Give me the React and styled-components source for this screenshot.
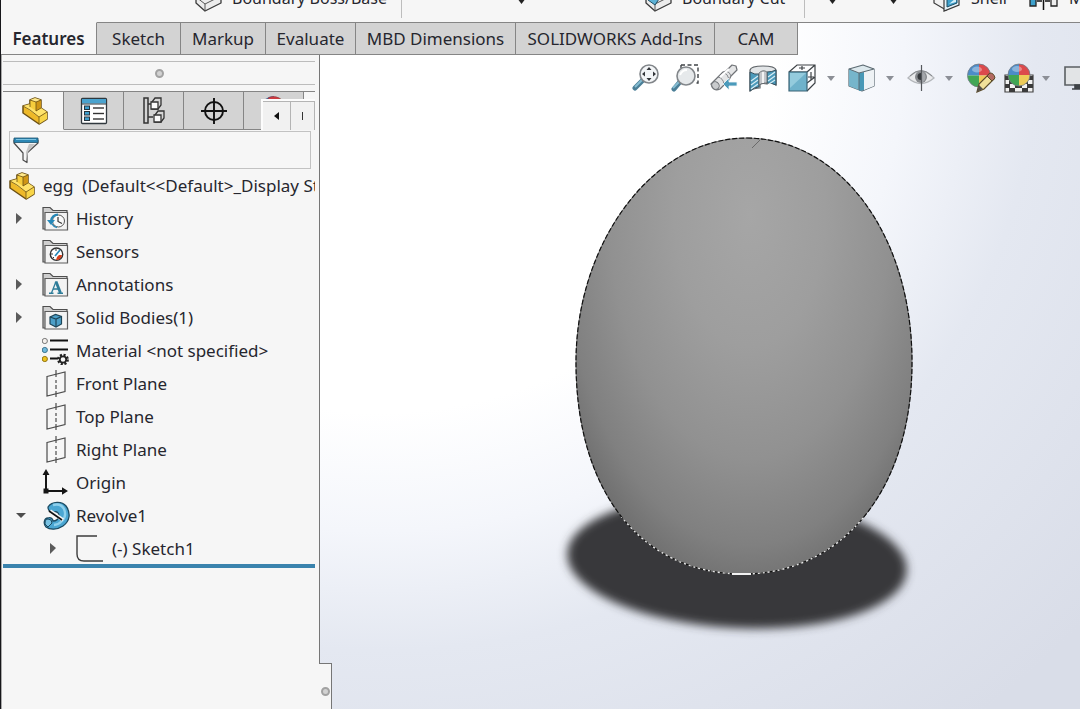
import React from "react";
import styled, { createGlobalStyle, css } from "styled-components";

const GlobalStyle = createGlobalStyle`
  *, *::before, *::after { box-sizing: border-box; }
  body {
    margin: 0;
    font-family: "Noto Sans", "Open Sans", sans-serif;
    font-size: 17px;
    line-height: 24px;
    color: #26262e;
    background: #f6f6f6;
  }
  button, input { font: inherit; color: inherit; margin: 0; padding: 0; border: 0; background: none; }
  ul { list-style: none; margin: 0; padding: 0; }
  svg { display: block; flex: none; }
`;

const Window = styled.div`
  min-height: 100vh;
  display: flex;
  flex-direction: column;
  overflow: hidden;
  border-left: 1px solid #16161a;
`;

/* ---------- ribbon ---------- */
const Ribbon = styled.header`
  height: 22px;
  display: flex;
  align-items: flex-end;
  padding: 0 0 10px 194px;
  overflow: hidden;
  background: #f6f6f6;
`;
const RibbonGroup = styled.div`
  display: flex;
  align-items: flex-end;
  flex: none;
  width: ${(p) => p.$width}px;
`;
const RibbonButton = styled.button`
  display: flex;
  align-items: flex-end;
  gap: 10px;
  flex: none;
  white-space: nowrap;
  font-size: 16px;
  line-height: 28px;
`;
const RibbonDrop = styled.button`
  flex: none;
  margin-left: auto;
  padding-bottom: 8px;
`;
const RibbonRule = styled.span`
  flex: none;
  width: 1px;
  height: 40px;
  margin-bottom: -6px;
  background: #bdbdbd;
`;

/* ---------- command tabs ---------- */
const Stage = styled.main`
  flex: 1;
  display: flex;
  flex-direction: column;
  background: radial-gradient(ellipse 76% 108% at 35% 5%, #ffffff 0 48%, #f4f6fb 64%, #e4e8f1 80%, #d9dde8 115%);
`;
const CommandTabs = styled.nav`
  display: flex;
  height: 33px;
`;
const CommandTab = styled.button`
  flex: none;
  width: ${(p) => p.$width}px;
  height: 33px;
  border-right: 1px solid #858585;
  border-bottom: 1px solid #858585;
  border-top: 1px solid #858585;
  background: #d3d3d3;
  font-size: 17px;
  white-space: nowrap;
  ${(p) =>
    p.$active &&
    css`
      border-top-color: #f6f6f6;
      background: #f6f6f6;
      font-weight: 600;
    `}
`;
const TabsRest = styled.div`
  flex: 1;
  border-top: 1px solid #858585;
`;

/* ---------- side panel ---------- */
const Body = styled.div`
  flex: 1;
  display: flex;
`;
const Side = styled.aside`
  flex: none;
  width: 331px;
  display: flex;
  flex-direction: column;
`;
const Panel = styled.section`
  flex: 1;
  width: 319px;
  padding: 0 4px 0 1px;
  border-left: 1px solid #a9a9a9;
  border-right: 1px solid #767676;
  background: #f6f6f6;
`;
const Grip = styled.div`
  height: 24px;
  margin-top: 6px;
  display: flex;
  align-items: center;
  justify-content: center;
  border-top: 1px solid #bcbcbc;
  border-bottom: 1px solid #bcbcbc;
`;
const Dot = styled.span`
  width: 9px;
  height: 9px;
  border: 2px solid #a2a2a2;
  border-radius: 50%;
  background: #d2d2d2;
`;
const ManagerTabs = styled.div`
  position: relative;
  display: flex;
  height: 39px;
  margin-top: 6px;
  overflow: hidden;
  border-top: 1px solid #858585;
`;
const ManagerTab = styled.button`
  flex: none;
  width: ${(p) => (p.$active ? 61 : 60)}px;
  display: flex;
  align-items: center;
  justify-content: center;
  border-right: 1px solid #858585;
  border-bottom: 1px solid ${(p) => (p.$active ? "#f6f6f6" : "#858585")};
  background: ${(p) => (p.$active ? "#f6f6f6" : "#d3d3d3")};
  ${(p) => p.$active && "padding-left: 4px;"}
`;
const TabScroller = styled.div`
  position: absolute;
  right: 0;
  bottom: 0;
  display: flex;
  width: 54px;
  height: 31px;
  border-top: 2px solid #fcfcfc;
  border-left: 2px solid #fcfcfc;
`;
const ScrollButton = styled.button`
  flex: none;
  width: ${(p) => p.$width}px;
  display: flex;
  align-items: center;
  justify-content: center;
  border: 1px solid #b4b4b4;
  border-width: 1px 1px 0 0;
  background: #f1f1f1;
`;
const FilterBox = styled.label`
  display: flex;
  align-items: center;
  gap: 8px;
  height: 38px;
  margin: 1px 4px 0 6px;
  padding-left: 3px;
  border: 1px solid #c2c2c2;
`;
const FilterInput = styled.input`
  flex: 1;
  min-width: 0;
  height: 32px;
  outline: none;
`;
const TreeRow = styled.li`
  display: flex;
  align-items: center;
  height: 33px;
  padding-left: ${(p) => p.$indent}px;
  overflow: hidden;
  white-space: pre;
`;
const Expander = styled.button`
  flex: none;
  width: 26px;
  height: 20px;
  display: flex;
  align-items: center;
`;
const TreeLabel = styled.button`
  display: flex;
  align-items: center;
  gap: ${(p) => (p.$nested ? 10 : 8)}px;
  white-space: pre;
`;
const IconSlot = styled.span`
  flex: none;
  width: 26px;
`;
const RollbackBar = styled.div`
  height: 4px;
  margin-top: -1px;
  background: #3a83ad;
`;
const SideFoot = styled.div`
  height: 46px;
  display: flex;
`;
const FootFill = styled.div`
  flex: 1;
  border-left: 1px solid #a9a9a9;
  background: #f6f6f6;
`;
const FootGrip = styled.div`
  width: 13px;
  display: flex;
  align-items: center;
  justify-content: center;
  padding-top: 9px;
  border-top: 1px solid #767676;
  border-right: 1px solid #767676;
  background: #f6f6f6;
`;

/* ---------- graphics area ---------- */
const Canvas = styled.section`
  flex: 1;
  min-width: 0;
  display: flex;
  flex-direction: column;
  overflow: hidden;
`;
const ViewTools = styled.div`
  display: flex;
  align-items: center;
  height: 46px;
  padding-left: 300px;
`;
const ToolGroup = styled.div`
  flex: none;
  display: flex;
`;
const ViewTool = styled.button`
  flex: none;
  width: ${(p) => (p.$wide ? 39 : 38)}px;
  height: 36px;
  display: flex;
  align-items: center;
`;
const ViewDrop = styled.button`
  flex: none;
  width: 21px;
  height: 36px;
  display: flex;
  align-items: center;
`;
const Scene = styled.div`
  display: flex;
  justify-content: center;
  padding: 19px 0 0 76px;
`;

/* ---------- icons ---------- */
const Svg = ({ w = 28, h = 28, children }) => (
  <svg width={w} height={h} viewBox={`0 0 ${w} ${h}`} fill="none" aria-hidden="true">
    {children}
  </svg>
);

const PartIcon = () => (
  <Svg w={26} h={28}>
    <path d="M1 9l7-2V3l5-2 6 2v8l6 4v7l-8 5L1 16z" fill="#eeb929" stroke="#6b5015" strokeWidth="1.500" strokeLinejoin="round" />
    <path d="M1 9l7-2 4 3 7 1 6 4-8 5z" fill="#ffe36b" />
    <path d="M8 3l5-2 6 2-5 2z" fill="#ffe88a" />
    <path d="M8 3l6 2v9l-6-4z" fill="#f6cd3c" />
    <path d="M14 5l5-2v8l-5 3z" fill="#cf9616" />
    <path d="M17 20l8-5v7l-8 5z" fill="#f8d548" />
    <path d="M8 3v7M8 3l6 2 5-2M14 5v9M1 9l7 4 9 7v7M17 20l8-5M14 14l5-3" stroke="#6b5015" strokeWidth=".8" />
  </Svg>
);
const PropertyIcon = () => (
  <Svg w={28} h={28}>
    <rect x="1.500" y="1.500" width="25" height="25" rx="1" fill="#fff" stroke="#30383e" strokeWidth="1.300" />
    <rect x="2" y="2" width="24" height="4.500" fill="#4aa3cf" />
    <path d="M1.500 7h25" stroke="#30383e" />
    {[9, 14.5, 20].map((y) => (
      <g key={y}>
        <rect x="4.500" y={y} width="5" height="3.500" fill="#3d9fce" stroke="#26343e" />
        <path d={`M13 ${y + 2}h11`} stroke="#333" strokeWidth="1.400" />
      </g>
    ))}
  </Svg>
);
const ConfigIcon = () => (
  <Svg w={24} h={28}>
    <path d="M2 1h4v25H2zM6 7h5M6 20h5" stroke="#333" strokeWidth="1.500" />
    <path d="M10 5l3-4h6v7l-3 4h-6zM13 18l3-4h6v7l-3 4h-6z" fill="#d6d6d6" stroke="#333" strokeWidth="1.300" />
    <path d="M9 5h7v7H9zM12 18h7v7h-7z" fill="#fafafa" stroke="#333" strokeWidth="1.300" />
  </Svg>
);
const TargetIcon = () => (
  <Svg w={28} h={28}>
    <circle cx="14" cy="14" r="9" stroke="#111" strokeWidth="1.900" />
    <path d="M14 1v26M1 14h26" stroke="#111" strokeWidth="1.900" />
  </Svg>
);
const DisplayIcon = () => (
  <Svg w={28} h={32}>
    <circle cx="14" cy="15" r="13" fill="#41a655" />
    <path d="M1 12A13 13 0 0 1 14 1v14z" fill="#4b6d9e" />
    <path d="M8 3Q16-1 23 6L12 8z" fill="#cf3b40" stroke="#8d3a44" strokeWidth=".6" />
  </Svg>
);
const FunnelIcon = () => (
  <Svg w={26} h={28}>
    <path d="M1 4v3l9 10v7l4 2.500V17L25 7V4z" fill="#f4f4f4" stroke="#4b4b4b" strokeWidth="1.200" strokeLinejoin="round" />
    <path d="M15 16l7-8h-6l-3 8v9z" fill="#c4c4c4" />
    <path d="M1 2h24v4.500H1z" fill="#2c87b4" stroke="#1e5470" strokeWidth=".8" />
    <path d="M3 3.500h20" stroke="#7cc3e2" />
  </Svg>
);
const Folder = ({ children }) => (
  <Svg w={27} h={28}>
    <path d="M1 24V2.500h7l3 3h14V24z" fill="#cfcfcf" stroke="#4e4e4e" strokeWidth="1.200" />
    <path d="M3 7.500h22.500V25H3z" fill="#f3f3f3" stroke="#5c5c5c" strokeWidth="1.200" />
    {children}
  </Svg>
);
const HistoryIcon = () => (
  <Folder>
    <circle cx="16.500" cy="16" r="6" fill="#fafafa" stroke="#555" />
    <path d="M16 12v4.500l4 2" stroke="#333" strokeWidth="1.200" />
    <path d="M16 9.500a7 7 0 0 0-7 6.500" stroke="#2688b8" strokeWidth="2.200" />
    <path d="M5 15h8l-4 5z" fill="#2688b8" />
    <path d="M10 19a7 7 0 0 0 5 3.500" stroke="#2688b8" strokeWidth="1.500" />
  </Folder>
);
const SensorIcon = () => (
  <Folder>
    <circle cx="14.500" cy="16.200" r="6.200" fill="#fff" stroke="#333" strokeWidth="1.400" />
    <path d="M20 17a5.500 5.500 0 0 1-6 5l1-3 2-2z" fill="#d8401c" />
    <path d="M13 18l5-6" stroke="#2688b8" strokeWidth="1.700" />
    <path d="M9 16h2M14 11v2M11 20l1-1" stroke="#333" />
  </Folder>
);
const AnnotationIcon = () => (
  <Folder>
    <path d="M9.500 22l4.500-11.500" stroke="#2d7c99" strokeWidth="1.300" />
    <path d="M14 10.500L18.500 22" stroke="#2d7c99" strokeWidth="2.800" />
    <path d="M11 18h6M7 22.300h4.500M15.500 22.300h5.500" stroke="#2d7c99" strokeWidth="1.400" />
  </Folder>
);
const BodiesIcon = () => (
  <Folder>
    <path d="M8 13l5.500-2.500 6 2v7.500L14 23l-6-3z" fill="#4c9fc8" stroke="#1d4558" strokeWidth="1.200" />
    <path d="M8 13l6 2 5.500-2.500M14 15v8" stroke="#1d4558" strokeWidth="1.200" />
  </Folder>
);
const MaterialIcon = () => (
  <Svg w={28} h={28}>
    <circle cx="2.800" cy="4" r="2.600" fill="#f3efec" stroke="#777" />
    <circle cx="2.800" cy="13" r="2.600" fill="#6fb9dc" stroke="#3c7390" />
    <circle cx="2.800" cy="22" r="2.600" fill="#eec31e" stroke="#927512" />
    <path d="M8 3.500h18M8 12.500h18M8 21.500h8" stroke="#111" strokeWidth="2" />
    <circle cx="21" cy="22.500" r="4.600" stroke="#222" strokeWidth="2.600" strokeDasharray="2 1.610" />
    <circle cx="21" cy="22.500" r="3.200" fill="#f6f6f6" stroke="#222" strokeWidth="1.800" />
  </Svg>
);
const PlaneIcon = () => (
  <Svg w={28} h={28}>
    <path d="M5 6.500L23 2v19.500L5 26z" stroke="#4c4c4c" strokeWidth="1.200" />
    <path d="M14 0v7M14 10v3M14 15v4M14 21v6" stroke="#4c4c4c" strokeWidth="1.200" />
  </Svg>
);
const OriginIcon = () => (
  <Svg w={28} h={28}>
    <path d="M4 22V4M4 22h18" stroke="#161616" strokeWidth="2" />
    <path d="M4 0l3.500 6h-7zM26 22l-6-3.800v7.600zM1.500 19.500h5v5h-5z" fill="#161616" />
  </Svg>
);
const RevolveIcon = () => (
  <Svg w={28} h={30}>
    <path d="M6 6C10 0 20 0 24 5c5 7 4 15-3 20-6 4-13 4-17 1-3-3-2-9 2-9 3-1 5 1 5 3 3 0 6-2 6-5 0-3-2-5-5-4-3 1-6-1-6-5z" fill="#4aa6d2" stroke="#1b4a61" strokeWidth="1.300" />
    <path d="M11 4q8-2 11 4 3 7-2 12-4 4-8 4" stroke="#8ed0ec" strokeWidth="2.400" />
    <path d="M3 23q0-5 3-5 4 0 4 4l-4 4z" fill="#78c2e3" stroke="#1b4a61" />
    <path d="M8 10l13 9" stroke="#f6f6f6" strokeWidth="3.500" />
    <path d="M7 10l13 9" stroke="#111" strokeWidth="1.600" />
  </Svg>
);
const SketchIcon = () => (
  <Svg w={28} h={28}>
    <path d="M21 1H1v18q0 7 7 7h19" stroke="#3d3d3d" strokeWidth="1.400" />
  </Svg>
);
const BossIcon = ({ tint }) => (
  <Svg w={27} h={30}>
    <path d="M1 15l8-6 17 5v7l-16 8-9-8z" fill="#ececec" stroke="#3a3a3a" strokeWidth="1.300" strokeLinejoin="round" />
    <path d="M1 15l9 7 16-8M10 22v7" stroke="#555" />
    {tint && <path d="M3 18l6-7 7 3-6 9z" fill="#5eb2d6" stroke="#225066" />}
  </Svg>
);
const ShellIcon = () => (
  <Svg w={28} h={30}>
    <path d="M1 4h12v24L1 21z" fill="#f1f1f1" stroke="#3a3a3a" strokeWidth="1.200" />
    <path d="M11 4h15v19l-15 6z" fill="#e4f1f7" stroke="#3a3a3a" strokeWidth="1.200" />
    <path d="M14 6h10v15l-10 4z" fill="#3da0cc" stroke="#1b4a61" />
    <path d="M16 22l7-6v4z" fill="#d4eef8" />
  </Svg>
);
const MirrorIcon = () => (
  <Svg w={30} h={30}>
    <path d="M1 5h6v19H1z" fill="#3da0cc" stroke="#222" strokeWidth="1.300" />
    <path d="M22 5h6v19h-6z" fill="#eee" stroke="#222" strokeWidth="1.300" />
    <path d="M14.500 2v26M8 19h5M16 19h5" stroke="#111" strokeWidth="1.500" />
  </Svg>
);
const SmallDown = ({ dark }) => (
  <Svg w={9} h={dark ? 6 : 5}>
    <path d={dark ? "M0 0h9L4.500 6z" : "M0 0h8L4 5z"} fill={dark ? "#222" : "#8c8f96"} />
  </Svg>
);
const TreeArrow = ({ open }) =>
  open ? (
    <Svg w={12} h={8}>
      <path d="M0 1h10L5 6z" fill="#4d4d4d" />
    </Svg>
  ) : (
    <Svg w={8} h={12}>
      <path d="M0 0l6 5L0 11z" fill="#5b5b5b" />
    </Svg>
  );

const ZoomFitIcon = () => (
  <Svg w={27} h={28}>
    <path d="M11 16l-8 8" stroke="#4b7f97" strokeWidth="5" strokeLinecap="round" />
    <path d="M10 16l-7 7" stroke="#86bdd2" strokeWidth="2" />
    <circle cx="17" cy="10" r="9" fill="#f3f5f7" stroke="#82868a" strokeWidth="1.600" />
    <path d="M17 3l2.500 3h-5zM17 17l2.500-3h-5zM10 10l3-2.500v5zM24 10l-3-2.500v5z" fill="#34373b" />
  </Svg>
);
const ZoomAreaIcon = () => (
  <Svg w={29} h={28}>
    <path d="M10 1h17v18h-4M10 1v3" stroke="#3f4347" strokeWidth="1.400" strokeDasharray="4 2.500" />
    <path d="M8 19l-5 6" stroke="#4b7f97" strokeWidth="5" strokeLinecap="round" />
    <path d="M8 18l-6 6" stroke="#86bdd2" strokeWidth="2" />
    <circle cx="15" cy="12" r="9" fill="#e6e9eb" stroke="#82868a" strokeWidth="1.600" />
    <path d="M9 11q2-5 7-5" stroke="#fff" strokeWidth="2" />
  </Svg>
);
const PrevViewIcon = () => (
  <Svg w={28} h={28}>
    <path d="M1 20L13 8l3-1 6-6 4 1 1 4-6 6-2 4-9 9q-7 3-9-5z" fill="#e4e5e6" stroke="#6f7276" strokeWidth="1.200" strokeLinejoin="round" />
    <path d="M13 8q5 2 6 7M16 7q4 1 5 5M8 13q5 1 6 7" stroke="#85888c" />
    <path d="M10 13l9-8" stroke="#fff" strokeWidth="2" />
    <ellipse cx="5.500" cy="21.500" rx="3.500" ry="4" transform="rotate(-40 5.500 21.500)" fill="#c9cbcd" stroke="#6f7276" />
    <path d="M13 20l6-6v4h8v4h-8v4z" fill="#4b9abb" stroke="#f4f6f8" strokeWidth=".8" />
  </Svg>
);
const SectionIcon = () => (
  <Svg w={28} h={28}>
    <path d="M1 8V6q1-4 13-4t13 4v15q-4-3-9-3v2q-4-1-7 0v4q-6 0-10 3z" fill="#e2e5e7" stroke="#5f6468" strokeWidth="1.200" />
    <path d="M1 8q5 3 9 2v13q-5 0-9 4z" fill="#4b9abb" stroke="#35505e" />
    <path d="M18 8q5 0 9-2v15q-4-2-9-2z" fill="#4b9abb" stroke="#35505e" />
    <path d="M2 17l7-5M2 21l7-5M2 25l7-5M19 13l7-5M19 17l7-5M20 20l6-4" stroke="#d8edf5" strokeWidth="1.200" />
    <path d="M10 9q4-4 8-1v11q-4-1-8 2z" fill="#c3c6ca" stroke="#5f6468" strokeWidth=".8" />
    <path d="M14 8v11" stroke="#f2f3f4" strokeWidth="2" />
  </Svg>
);
const OrientationIcon = () => (
  <Svg w={28} h={28}>
    <path d="M1 8l8-7h18v18l-8 8M19 8l8-7M1 8h18M19 19l8-6M14 2v4M11 4h6M23 8v8M20 13h6" stroke="#3c4145" strokeWidth="1.200" />
    <path d="M1 8h18v19H1z" fill="#6fb2cb" stroke="#3a6375" strokeWidth="1.200" />
    <path d="M2 9h16L2 24z" fill="#94cbdd" />
  </Svg>
);
const ShadedCubeIcon = () => (
  <Svg w={28} h={28}>
    <path d="M1 5l14-4 11 4v17l-12 5-13-5z" fill="#dce8ed" stroke="#5c6a72" strokeWidth="1.200" strokeLinejoin="round" />
    <path d="M1 5l10 4v17L1 22z" fill="#76b5cb" />
    <path d="M11 9l5-1v18l-5 1z" fill="#4898b6" />
    <path d="M16 8l10-3v17l-10 4z" fill="#eef2f5" />
    <path d="M1 5l10 4 15-4M11 9v17" stroke="#5c6a72" />
  </Svg>
);
const EyeIcon = () => (
  <Svg w={28} h={28}>
    <path d="M1 14Q14 0 27 14 14 25 1 14z" fill="#e9eaec" stroke="#b4b7bb" strokeWidth="1.300" />
    <path d="M3 12Q14 1 25 12" stroke="#85888c" />
    <circle cx="14" cy="13" r="6" fill="#85888c" />
    <circle cx="14" cy="12.500" r="3.500" fill="#35383c" />
    <path d="M15 7.500a6 6 0 0 1 0 11z" fill="#a4a7ab" />
    <path d="M14.500 1v26" stroke="#55585c" strokeWidth="1.200" />
  </Svg>
);
const Ball = ({ cx, cy, r }) => (
  <g>
    <path d={`M${cx} ${cy}V${cy - r}A${r} ${r} 0 0 0 ${cx - r} ${cy}z`} fill="#4c8cc8" />
    <path d={`M${cx} ${cy}H${cx + r}A${r} ${r} 0 0 0 ${cx} ${cy - r}z`} fill="#dc4a4c" />
    <path d={`M${cx} ${cy}H${cx - r}A${r} ${r} 0 0 0 ${cx} ${cy + r}z`} fill="#41a655" />
    <path d={`M${cx} ${cy}V${cy + r}A${r} ${r} 0 0 0 ${cx + r} ${cy}z`} fill="#edcb58" />
    <circle cx={cx} cy={cy} r={r} stroke="#717a84" strokeWidth=".8" />
    <ellipse cx={cx - 2} cy={cy - 6} rx="5" ry="3" fill="#fff" opacity=".35" />
  </g>
);
const AppearanceIcon = () => (
  <Svg w={30} h={30}>
    <Ball cx={13} cy={12.5} r={11.5} />
    <path d="M11 29l2-8 10-10 5 5-10 10z" fill="#f1e09a" stroke="#5c4c2a" strokeWidth="1.200" />
    <path d="M21 13l3-3q4 0 5 5l-3 3z" fill="#b46a62" stroke="#5c4c2a" />
    <path d="M11 29l2-7 4 4z" fill="#55504a" />
  </Svg>
);
const SceneIcon = () => (
  <Svg w={30} h={30}>
    <path d="M1 12h28v17H1z" fill="#f2f2f2" stroke="#444" strokeWidth="1.200" />
    <path d="M1 13h4v4H1zM24 13h5v4h-5zM5 17h5v4H5zM19 17h5v4h-5zM1 21h5v4H1zM11 22h7v3h-7zM23 21h6v4h-6zM5 25h6v4H5zM18 25h6v4h-6z" fill="#3b3b3b" />
    <Ball cx={15} cy={12} r={11} />
  </Svg>
);
const MonitorIcon = () => (
  <Svg w={30} h={30}>
    <path d="M2 4h27v18H2z" fill="#e2e4e6" stroke="#5b5f63" strokeWidth="1.600" />
    <path d="M12 22h6v4h-6zM9 26h14" fill="#3f4347" stroke="#3f4347" strokeWidth="1.600" />
  </Svg>
);

const EGG = "M747 138C842 139 912 237 912 362C912 490 842 574 743 574C640 574 576 490 576 362C576 244 652 138 747 138Z";

const EggModel = () => (
  <svg width="400" height="520" viewBox="544 120 400 520" fill="none" role="img" aria-label="egg">
    <defs>
      <radialGradient id="eggShade" gradientUnits="userSpaceOnUse" cx="0" cy="0" r="1" gradientTransform="translate(750 215) scale(215 375)">
        <stop offset="0" stopColor="#a6a6a6" />
        <stop offset=".35" stopColor="#9e9e9e" />
        <stop offset=".65" stopColor="#919191" />
        <stop offset=".88" stopColor="#808080" />
        <stop offset="1" stopColor="#707070" />
      </radialGradient>
      <filter id="shadowBlur" x="-20%" y="-30%" width="140%" height="160%">
        <feGaussianBlur stdDeviation="5" />
      </filter>
      <clipPath id="contact">
        <path d="M544 517h400v123H544z" />
      </clipPath>
    </defs>
    <ellipse cx="737" cy="562" rx="170" ry="66" transform="rotate(3 737 562)" fill="#38393a" filter="url(#shadowBlur)" />
    <path d={EGG} fill="url(#eggShade)" stroke="#6e6e6e" />
    <path d={EGG} stroke="#111" strokeWidth="1.200" strokeDasharray="5 2" />
    <path d={EGG} stroke="#e6e6e6" strokeWidth="1.400" strokeDasharray="2 3" clipPath="url(#contact)" />
    <path d="M732 574h19" stroke="#f2f2f2" strokeWidth="2" />
    <path d="M752 148l8-8" stroke="#6a6a6a" />
  </svg>
);

/* ---------- data ---------- */
const COMMAND_TABS = [
  ["Features", 96],
  ["Sketch", 84],
  ["Markup", 85],
  ["Evaluate", 90],
  ["MBD Dimensions", 160],
  ["SOLIDWORKS Add-Ins", 199],
  ["CAM", 83],
];

const MANAGER_TABS = [
  ["Feature tree", PartIcon],
  ["Properties", PropertyIcon],
  ["Configurations", ConfigIcon],
  ["Dimension expert", TargetIcon],
  ["Display", DisplayIcon],
];

const TREE = [
  { label: "History", icon: HistoryIcon, arrow: true },
  { label: "Sensors", icon: SensorIcon },
  { label: "Annotations", icon: AnnotationIcon, arrow: true },
  { label: "Solid Bodies(1)", icon: BodiesIcon, arrow: true },
  { label: "Material <not specified>", icon: MaterialIcon },
  { label: "Front Plane", icon: PlaneIcon },
  { label: "Top Plane", icon: PlaneIcon },
  { label: "Right Plane", icon: PlaneIcon },
  { label: "Origin", icon: OriginIcon },
  { label: "Revolve1", icon: RevolveIcon, arrow: true, open: true },
  { label: "(-) Sketch1", icon: SketchIcon, arrow: true, nested: true },
];

const VIEW_TOOLS = [
  {
    wide: true,
    menu: "Orientation options",
    tools: [
      ["Zoom to fit", ZoomFitIcon],
      ["Zoom to area", ZoomAreaIcon],
      ["Previous view", PrevViewIcon],
      ["Section view", SectionIcon],
      ["View orientation", OrientationIcon],
    ],
  },
  { menu: "Display style options", tools: [["Display style", ShadedCubeIcon]] },
  { menu: "Visibility options", tools: [["Hide or show items", EyeIcon]] },
  { menu: "Scene options", tools: [["Edit appearance", AppearanceIcon], ["Apply scene", SceneIcon]] },
  { tools: [["View settings", MonitorIcon]] },
];

export default function App() {
  return (
    <Window>
      <GlobalStyle />
      <Ribbon>
        <RibbonGroup $width={206}>
          <RibbonButton><BossIcon />Boundary Boss/Base</RibbonButton>
        </RibbonGroup>
        <RibbonRule />
        <RibbonGroup $width={124}>
          <RibbonDrop aria-label="More boss options"><SmallDown dark /></RibbonDrop>
        </RibbonGroup>
        <RibbonGroup $width={119} />
        <RibbonGroup $width={159}>
          <RibbonButton><BossIcon tint />Boundary Cut</RibbonButton>
        </RibbonGroup>
        <RibbonRule />
        <RibbonGroup $width={32}>
          <RibbonDrop aria-label="Fillet options"><SmallDown dark /></RibbonDrop>
        </RibbonGroup>
        <RibbonGroup $width={61}>
          <RibbonDrop aria-label="Pattern options"><SmallDown dark /></RibbonDrop>
        </RibbonGroup>
        <RibbonGroup $width={35} />
        <RibbonGroup $width={96}>
          <RibbonButton><ShellIcon />Shell</RibbonButton>
        </RibbonGroup>
        <RibbonButton><MirrorIcon />Mirror</RibbonButton>
      </Ribbon>

      <Stage>
        <CommandTabs>
          {COMMAND_TABS.map(([name, width], i) => (
            <CommandTab key={name} $width={width} $active={i === 0}>{name}</CommandTab>
          ))}
          <TabsRest />
        </CommandTabs>

        <Body>
          <Side>
            <Panel>
              <Grip><Dot /></Grip>
              <ManagerTabs>
                {MANAGER_TABS.map(([name, Icon], i) => (
                  <ManagerTab key={name} aria-label={name} $active={i === 0}><Icon /></ManagerTab>
                ))}
                <TabScroller>
                  <ScrollButton aria-label="Scroll left" $width={28}>
                    <Svg w={6} h={8}><path d="M5 0v8L0 4z" fill="#111" /></Svg>
                  </ScrollButton>
                  <ScrollButton aria-label="Scroll right" $width={24}>
                    <Svg w={6} h={8}><path d="M2.500 0v8" stroke="#333" /></Svg>
                  </ScrollButton>
                </TabScroller>
              </ManagerTabs>
              <FilterBox>
                <FunnelIcon />
                <FilterInput type="text" aria-label="Filter tree" />
              </FilterBox>
              <ul>
                <TreeRow $indent={6}>
                  <TreeLabel><PartIcon />{"egg  (Default<<Default>_Display State 1>)"}</TreeLabel>
                </TreeRow>
                {TREE.map(({ label, icon: Icon, arrow, open, nested }) => (
                  <TreeRow key={label} $indent={nested ? 47 : 13}>
                    {arrow ? (
                      <Expander aria-label={`Expand ${label}`}>
                        <TreeArrow open={open} />
                      </Expander>
                    ) : (
                      <Expander as="span" />
                    )}
                    <TreeLabel $nested={nested}><IconSlot><Icon /></IconSlot>{label}</TreeLabel>
                  </TreeRow>
                ))}
              </ul>
              <RollbackBar />
            </Panel>
            <SideFoot>
              <FootFill />
              <FootGrip><Dot /></FootGrip>
            </SideFoot>
          </Side>

          <Canvas>
            <ViewTools>
              {VIEW_TOOLS.map(({ wide, menu, tools }) => (
                <ToolGroup key={tools[0][0]}>
                  {tools.map(([name, Icon]) => (
                    <ViewTool key={name} aria-label={name} $wide={wide}><Icon /></ViewTool>
                  ))}
                  {menu && <ViewDrop aria-label={menu}><SmallDown /></ViewDrop>}
                </ToolGroup>
              ))}
            </ViewTools>
            <Scene><EggModel /></Scene>
          </Canvas>
        </Body>
      </Stage>
    </Window>
  );
}
